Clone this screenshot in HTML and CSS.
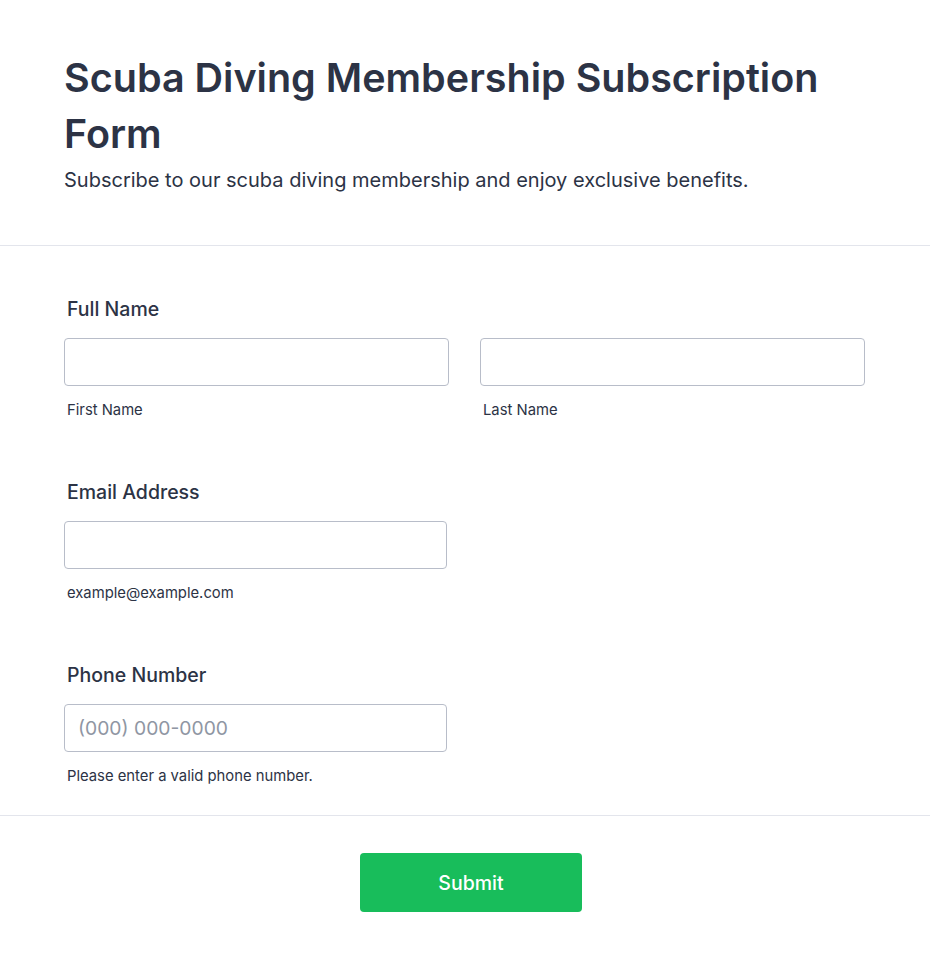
FILE: index.html
```html
<!DOCTYPE html>
<html lang="en">
<head>
<meta charset="UTF-8">
<meta name="viewport" content="width=device-width, initial-scale=1.0">
<title>Scuba Diving Membership Subscription Form</title>
<link rel="stylesheet" href="styles.css">
</head>
<body>
<form class="form" id="membershipForm">
  <div class="form-header">
    <h1>Scuba Diving Membership Subscription Form</h1>
    <p class="subtitle">Subscribe to our scuba diving membership and enjoy exclusive benefits.</p>
  </div>

  <div class="form-body">
    <div class="field">
      <label class="field-label">Full Name</label>
      <div class="name-row">
        <div class="name-col">
          <input type="text" id="firstName">
          <span class="sublabel">First Name</span>
        </div>
        <div class="name-col">
          <input type="text" id="lastName">
          <span class="sublabel">Last Name</span>
        </div>
      </div>
    </div>

    <div class="field">
      <label class="field-label" for="email">Email Address</label>
      <input type="email" id="email" class="half">
      <span class="sublabel">example@example.com</span>
    </div>

    <div class="field">
      <label class="field-label" for="phone">Phone Number</label>
      <input type="tel" id="phone" class="half" placeholder="(000) 000-0000">
      <span class="sublabel">Please enter a valid phone number.</span>
    </div>
  </div>

  <div class="form-footer">
    <button type="submit" class="submit-btn">Submit</button>
  </div>
</form>
</body>
</html>
```

FILE: styles.css
```css
body {
  margin: 0;
  padding: 0;
  background-color: #fff;
  font-family: Inter, "Noto Sans", sans-serif;
  color: #2c3345;
}
.form-header {
  padding: 50px 64px 50px;
  border-bottom: 1px solid #e3e5ec;
}
.form-header h1 {
  margin: 0;
  font-size: 39.5px;
  line-height: 56px;
  font-weight: 600;
  color: #2c3345;
}
.subtitle {
  margin: 3px 0 0;
  font-size: 20px;
  line-height: 30px;
}
.form-body {
  padding: 50px 65px 29px 64px;
  border-bottom: 1px solid #e3e5ec;
}
.field {
  display: flex;
  flex-direction: column;
  margin-bottom: 59px;
}
.field:last-child {
  margin-bottom: 0;
}
.field-label {
  padding-left: 3px;
  margin-bottom: 16px;
  font-size: 19.5px;
  line-height: 26px;
  font-weight: 500;
}
.name-row {
  display: flex;
  gap: 31px;
}
.name-col {
  flex: 1;
  display: flex;
  flex-direction: column;
}
input[type="text"], input[type="email"], input[type="tel"] {
  box-sizing: border-box;
  height: 48px;
  padding: 0 13px;
  border: 1px solid #b8bdc9;
  border-radius: 4px;
  font-family: inherit;
  font-size: 19.3px;
  color: #2c3345;
  outline: none;
}
input.half {
  width: 383px;
}
input::placeholder {
  color: #8f96a3;
}
.sublabel {
  padding-left: 3px;
  margin-top: 14px;
  font-size: 14.8px;
  line-height: 20px;
}
.form-footer {
  display: flex;
  justify-content: center;
  padding: 37px 0 50px 12px;
}
.submit-btn {
  width: 222px;
  height: 59px;
  border: none;
  border-radius: 4px;
  background-color: #18bd5b;
  color: #fff;
  font-family: inherit;
  font-size: 19.5px;
  font-weight: 500;
  cursor: pointer;
}
```
